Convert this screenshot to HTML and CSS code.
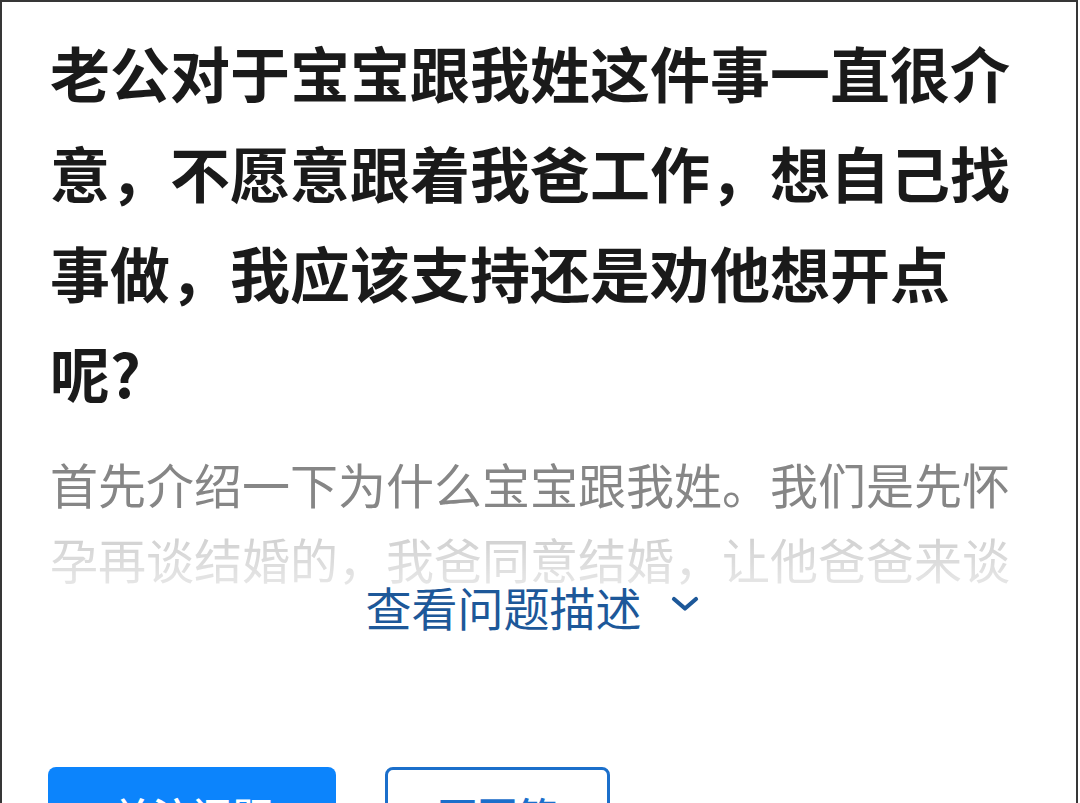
FILE: index.html
```html
<!DOCTYPE html>
<html lang="zh-CN">
<head>
<meta charset="utf-8">
<title>问题</title>
<link rel="stylesheet" href="styles.css">
</head>
<body>
<div class="page">
  <h1 class="title">老公对于宝宝跟我姓这件事一直很介意，不愿意跟着我爸工作，想自己找事做，我应该支持还是劝他想开点呢?</h1>
  <div class="desc">首先介绍一下为什么宝宝跟我姓。我们是先怀孕再谈结婚的，我爸同意结婚，让他爸爸来谈结婚的事情，他爸爸说家里没有钱。</div>
  <div class="more">
    <span class="more-text">查看问题描述</span>
    <svg class="chev" width="28" height="16" viewBox="0 0 28 16"><path d="M3 3 L14 12.5 L25 3" fill="none" stroke="#1d5899" stroke-width="4.2" stroke-linecap="round" stroke-linejoin="round"/></svg>
  </div>
  <div class="actions">
    <div class="btn btn-primary">关注问题</div>
    <div class="btn btn-outline">写回答</div>
  </div>
</div>
</body>
</html>
```
FILE: styles.css
```css
html, body {
  margin: 0;
  padding: 0;
  background: #ffffff;
}
body {
  font-family: "Noto Sans CJK SC", "Noto Sans", sans-serif;
  overflow: hidden;
  height: 803px;
}
.page {
  box-sizing: border-box;
  width: 1078px;
  height: 803px;
  overflow: hidden;
  border: 2px solid #363636;
  border-bottom: none;
  padding: 20px 48px 0 48px;
}
.title {
  margin: 0;
  font-size: 60px;
  line-height: 100px;
  font-weight: 700;
  color: #1a1a1a;
}
.desc {
  margin-top: 24px;
  font-size: 48px;
  line-height: 75px;
  height: 150px;
  overflow: hidden;
  color: #868686;
  -webkit-mask-image: linear-gradient(to bottom, #000 0, #000 75px, rgba(0,0,0,0.42) 80px, rgba(0,0,0,0.16) 150px);
  mask-image: linear-gradient(to bottom, #000 0, #000 75px, rgba(0,0,0,0.42) 80px, rgba(0,0,0,0.16) 150px);
}
.more {
  margin-top: -20px;
  display: flex;
  justify-content: center;
  align-items: center;
  gap: 29px;
  padding-right: 14px;
  font-size: 46px;
  line-height: 60px;
  color: #1d5899;
}
.chev {
  display: block;
  margin-top: -4px;
}
.actions {
  margin-top: 131px;
  margin-left: -2px;
  display: flex;
  gap: 49px;
}
.btn {
  box-sizing: border-box;
  height: 96px;
  border-radius: 8px;
  display: flex;
  align-items: center;
  justify-content: center;
  font-size: 40px;
  font-weight: 500;
}
.btn-primary {
  width: 288px;
  background: #0c84fc;
  color: #ffffff;
}
.btn-outline {
  width: 225px;
  border: 3px solid #1b6fcb;
  background: #ffffff;
  color: #1b6fcb;
}
```
